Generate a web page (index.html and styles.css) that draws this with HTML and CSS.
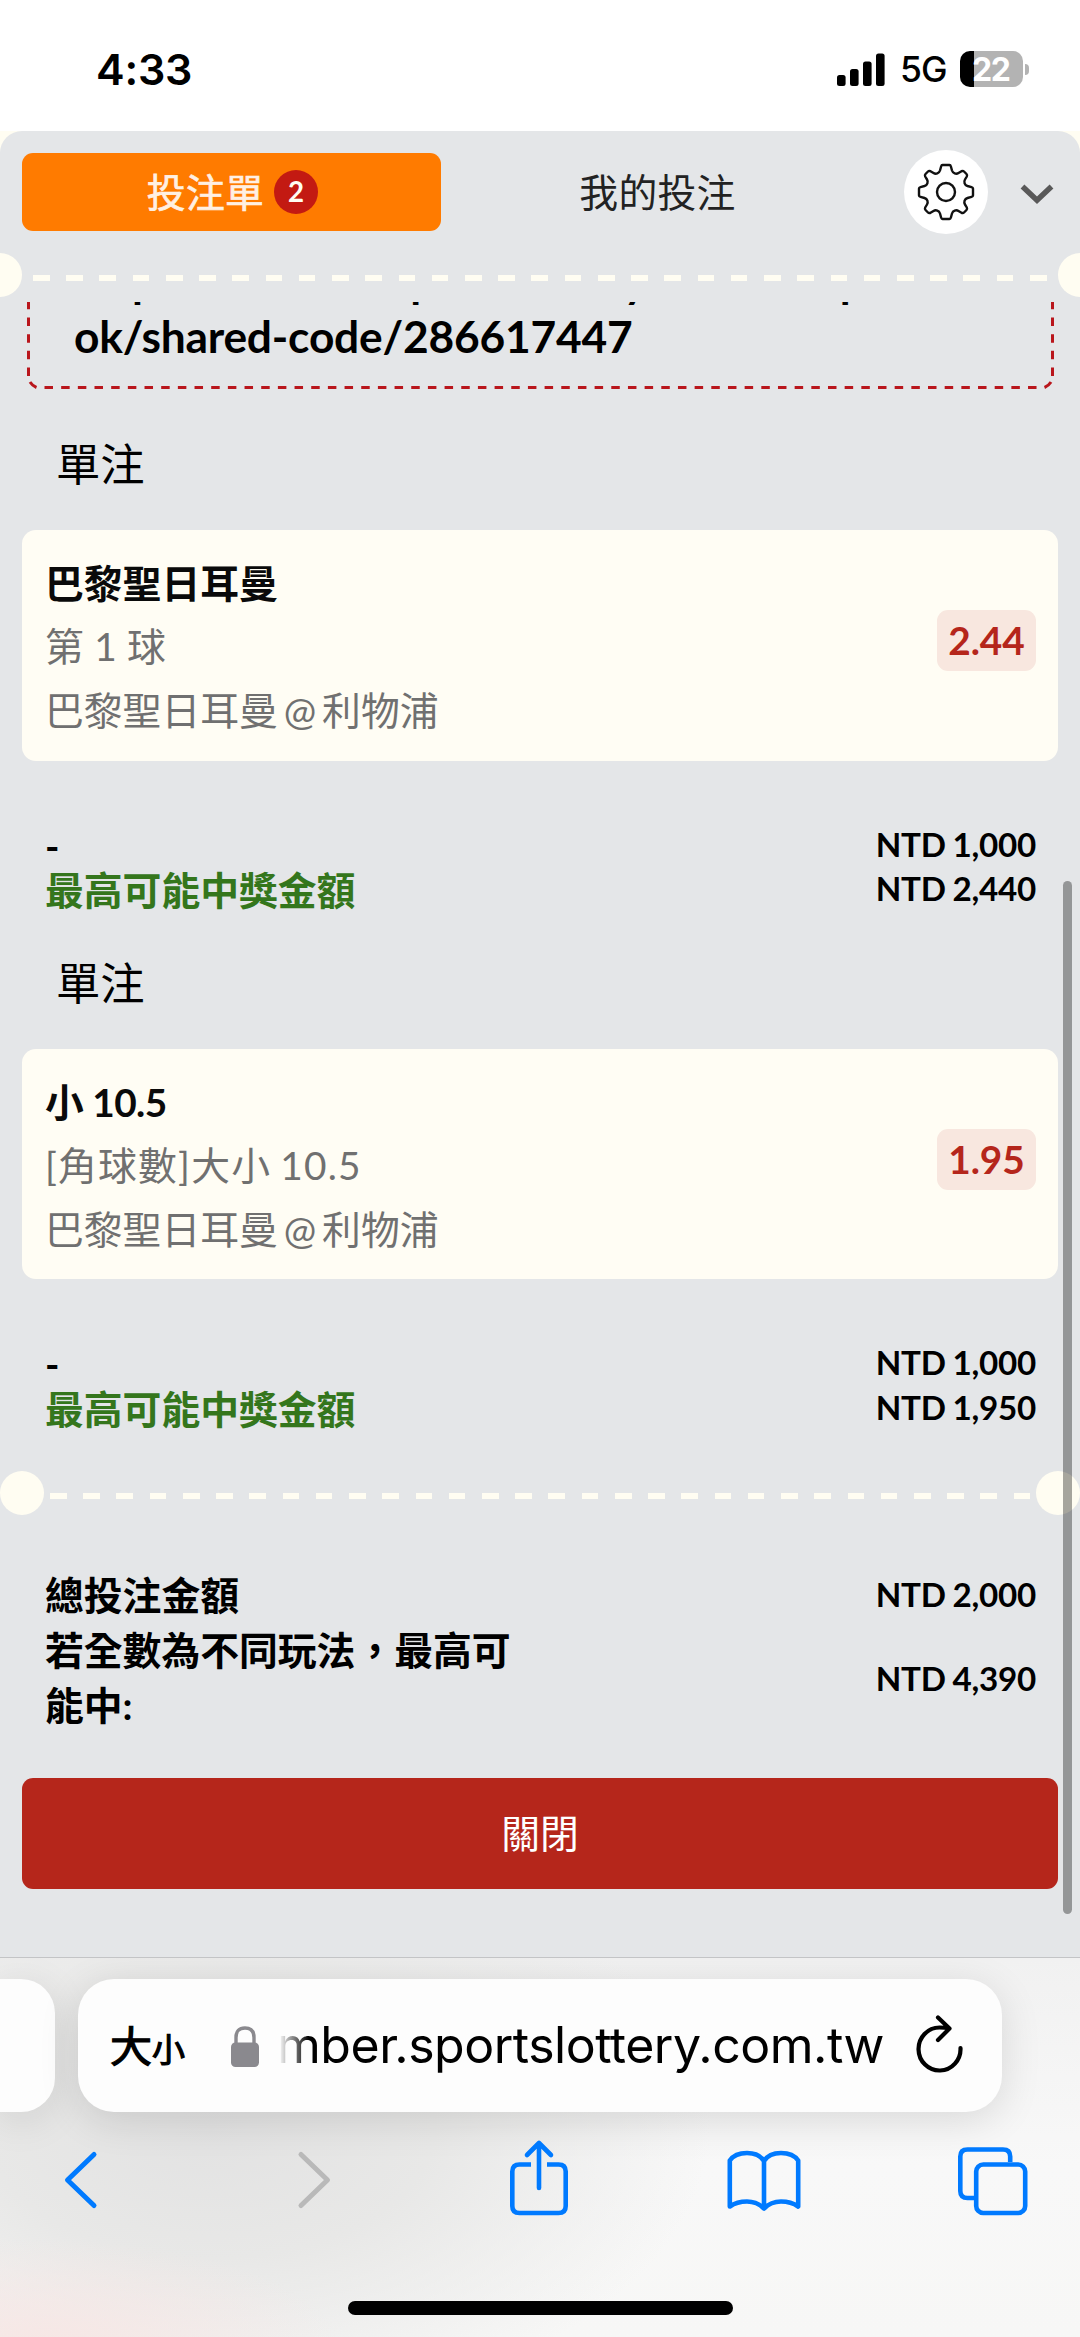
FILE: index.html
```html
<!DOCTYPE html>
<html lang="zh-Hant">
<head>
<meta charset="utf-8">
<title>投注單</title>
<link rel="stylesheet" href="styles.css">
</head>
<body>
<div class="phone">
  <header class="status">
    <span class="clock">4:33</span>
    <div class="status-right">
      <svg class="signal" width="48" height="33" viewBox="0 0 48 33"><rect x="0" y="22" width="8.6" height="11" rx="2.5"/><rect x="13" y="16" width="8.6" height="17" rx="2.5"/><rect x="26" y="8.5" width="8.6" height="24.500" rx="2.5"/><rect x="39" y="0.500" width="8.6" height="32.500" rx="2.5"/></svg>
      <span class="network">5G</span>
      <div class="battery"><span class="battery-body">22</span><span class="battery-cap"></span></div>
    </div>
  </header>

  <main class="sheet-wrap">
    <div class="sheet">
      <div class="tabs">
        <button class="tab tab-active">投注單<span class="badge">2</span></button>
        <button class="tab">我的投注</button>
        <button class="gear-btn">
          <svg width="58" height="58" viewBox="-29 -29 58 58" fill="none" stroke="#111" stroke-width="2.4" stroke-linejoin="round"><path d="M-3.500-27H3.500Q4.500-27 4.900-25.500L6-21.500Q6.700-19.300 8.700-18.600T12.500-19L15.500-20.800Q17-21.500 18-20.500L20.500-18Q21.500-17 20.800-15.500L19-12.500Q17.900-10.700 18.600-8.700T21.500-6L25.500-4.900Q27-4.500 27-3.500V3.500Q27 4.500 25.500 4.900L21.500 6Q19.300 6.700 18.600 8.700T19 12.500L20.800 15.500Q21.500 17 20.500 18L18 20.500Q17 21.500 15.500 20.800L12.500 19Q10.700 17.900 8.700 18.600T6 21.500L4.900 25.500Q4.500 27 3.500 27H-3.500Q-4.500 27-4.900 25.500L-6 21.500Q-6.700 19.300-8.700 18.600T-12.500 19L-15.500 20.800Q-17 21.500-18 20.500L-20.500 18Q-21.500 17-20.800 15.500L-19 12.500Q-17.900 10.700-18.600 8.700T-21.500 6L-25.500 4.900Q-27 4.500-27 3.500V-3.500Q-27-4.500-25.500-4.900L-21.500-6Q-19.300-6.700-18.600-8.700T-19-12.500L-20.800-15.500Q-21.500-17-20.500-18L-18-20.500Q-17-21.500-15.500-20.800L-12.500-19Q-10.700-17.900-8.700-18.600T-6-21.500L-4.900-25.500Q-4.500-27-3.500-27Z"/><circle r="9"/></svg>
        </button>
        <svg class="collapse" width="34" height="22" viewBox="0 0 34 22" fill="none" stroke="#595959" stroke-width="5.500"><path d="M2.500 3.500 17 17.200 31.500 3.500"/></svg>
      </div>
      <div class="tear tear-outer"><i class="hole"></i><i class="dash"></i><i class="hole"></i></div>

      <div class="content">
        <div class="share-box">
          <svg class="share-border" width="1027" height="147" viewBox="0 0 1027 147" fill="none" stroke="#b9161c" stroke-width="3"><path d="M1.500 58V137" stroke-dasharray="8.500 8.170" stroke-dashoffset="-.8"/><path d="M1025.500 58V137" stroke-dasharray="8.500 8.170" stroke-dashoffset="-.8"/><path d="M3 140Q5.500 144 9.500 145.500M1024 140Q1021.500 144 1017.500 145.500"/><path d="M17.500 145.500H1011" stroke-dasharray="8.500 8.170"/></svg>
          <p class="share-url"><span class="share-host">https://member.sportslottery.com.tw/sportsbo</span><br>ok/shared-code/286617447</p>
        </div>

        <section class="bet">
          <h2>單注</h2>
          <article class="card">
            <div class="pick"><p class="pick-name">巴黎聖日耳曼</p><p class="pick-market">第 1 球</p><p class="pick-event">巴黎聖日耳曼 @ 利物浦</p></div>
            <span class="odds">2.44</span>
          </article>
          <div class="summary">
            <div class="labels"><p class="stake">-</p><p class="win">最高可能中獎金額</p></div>
            <div class="amounts"><p>NTD 1,000</p><p>NTD 2,440</p></div>
          </div>
        </section>

        <section class="bet">
          <h2>單注</h2>
          <article class="card">
            <div class="pick"><p class="pick-name">小 <span class="line-value">10.5</span></p><p class="pick-market">[角球數]大小 10.5</p><p class="pick-event">巴黎聖日耳曼 @ 利物浦</p></div>
            <span class="odds">1.95</span>
          </article>
          <div class="summary">
            <div class="labels"><p class="stake">-</p><p class="win">最高可能中獎金額</p></div>
            <div class="amounts"><p>NTD 1,000</p><p>NTD 1,950</p></div>
          </div>
        </section>

        <div class="tear tear-inner"><i class="hole"></i><i class="dash"></i><i class="hole"></i></div>

        <div class="totals">
          <div class="total-row"><p class="total-label">總投注金額</p><p class="total-amount total-first">NTD 2,000</p></div>
          <div class="total-row"><p class="total-label">若全數為不同玩法，最高可能中:</p><p class="total-amount">NTD 4,390</p></div>
        </div>
        <button class="close">關閉</button>
      </div>
      <div class="scrollbar"></div>
    </div>
  </main>

  <footer class="browser">
    <div class="address-row">
      <div class="prev-tab"></div>
      <div class="address">
        <span class="text-size">大<small>小</small></span>
        <svg class="lock" width="28" height="41" viewBox="0 0 28 41"><path d="M5 18V11.500Q5 2 14 2T23 11.500V18" fill="none" stroke="#8a898e" stroke-width="3.400"/><rect y="16.500" width="28" height="24.500" rx="4.500" fill="#8a898e"/></svg>
        <span class="url">mber.sportslottery.com.tw</span>
        <svg class="reload" width="50" height="60" viewBox="0 0 50 60" fill="none" stroke="#000" stroke-width="4.200" stroke-linecap="round" stroke-linejoin="round"><path d="M45.500 34A21 21.500 0 1 1 24.500 13.500Q30 13.500 34 14.500M23 3.500 34.500 14.500 23 26"/></svg>
      </div>
    </div>
    <nav class="tools">
      <svg width="36" height="80" viewBox="0 0 36 80" fill="none" stroke="#007aff" stroke-width="5" stroke-linecap="round" stroke-linejoin="round"><path d="M32 16.500 5.500 42 32 67.500"/></svg>
      <svg class="forward" width="36" height="80" viewBox="0 0 36 80" fill="none" stroke="#b9b9b9" stroke-width="5" stroke-linecap="round" stroke-linejoin="round"><path d="M5 16.500 31.500 42 5 67.500"/></svg>
      <svg class="share" width="60" height="80" viewBox="0 0 60 80" fill="none" stroke="#007aff" stroke-width="4.600"><path d="M22 26.500H10.500Q3.300 26.500 3.300 33.500V68Q3.300 75 10.500 75H49.500Q56.700 75 56.700 68V33.500Q56.700 26.500 49.500 26.500H38"/><path d="M30 50V6M18 17 30 5 42 17" stroke-linecap="round" stroke-linejoin="round"/></svg>
      <svg width="74" height="80" viewBox="0 0 74 80" fill="none" stroke="#007aff" stroke-width="4.600" stroke-linejoin="round" stroke-linecap="round"><path d="M37 70.500V23Q32 15 20 15T2.800 22.500V68.500Q10 63.500 20 63.500T37 70.500Q44 63.500 54 63.500T71.200 68.500V22.500Q66 15 54 15T37 23"/></svg>
      <svg width="72" height="80" viewBox="0 0 72 80" fill="none" stroke="#007aff" stroke-width="4.600"><path d="M17 60H10.500Q3.300 60 3.300 53V18.500Q3.300 11.500 10.500 11.500H46Q53.200 11.500 53.200 18.500V24"/><rect x="19.200" y="26.500" width="49" height="48.500" rx="7"/></svg>
    </nav>
    <div class="home"></div>
  </footer>
</div>
</body>
</html>
```

FILE: styles.css
```css
* { box-sizing: border-box; margin: 0; padding: 0; }
body { background: #fff; color: #000; font-family: Lato, "Noto Sans CJK TC", sans-serif; }
button { border: 0; background: none; color: inherit; font: inherit; }
svg, i { display: block; flex: none; }

.phone { width: 1080px; height: 2337px; display: flex; flex-direction: column; overflow: hidden; }

/* status bar */
.status { height: 131px; flex: none; display: flex; justify-content: space-between; align-items: flex-start; padding: 0 51px 0 96px; font-family: Inter, sans-serif; }
.clock { font-size: 43px; font-weight: 600; line-height: 52px; margin-top: 43px; letter-spacing: -.2px; }
.status-right { display: flex; align-items: center; height: 36px; margin-top: 51px; }
.network { font-size: 35.500px; font-weight: 500; line-height: 36px; margin: 2px 0 0 15px; width: 60px; letter-spacing: -1px; }
.battery { display: flex; align-items: center; gap: 2px; }
.battery-body { width: 63px; height: 36px; border-radius: 10px; background: linear-gradient(90deg, #000 14px, #b3b3b3 14px); color: #fff; font-size: 32px; font-weight: 700; line-height: 37px; padding-left: 12px; letter-spacing: -1.500px; }
.battery-cap { width: 4px; height: 11px; border-radius: 0 5px 5px 0; background: #b3b3b3; }

/* bet slip sheet */
.sheet-wrap { height: 1826px; flex: none; background: #fffdf2; }
.sheet { position: relative; height: 100%; display: flex; flex-direction: column; background: #e4e6e8; border-radius: 22px 22px 0 0; }
.tabs { display: flex; align-items: center; height: 122px; flex: none; padding: 0 26px 0 22px; font-size: 38.800px; }
.tab { width: 419px; height: 78px; border-radius: 11px; display: flex; align-items: center; justify-content: center; line-height: 55px; letter-spacing: .3px; color: #222; }
.tab + .tab { width: 432px; padding-left: 1px; }
.tab-active { padding-left: 2px; background: #ff7b00; color: #fff0e3; -webkit-text-stroke: .7px #fff0e3; }
.badge { width: 44px; height: 44px; margin-left: 10px; border-radius: 50%; background: #c31a12; color: #fffdf2; font-size: 27.700px; font-weight: 700; line-height: 44px; text-align: center; letter-spacing: 0; -webkit-text-stroke: 0; }
.gear-btn { width: 84px; height: 84px; flex: none; margin-left: 31px; border-radius: 50%; background: #fff; display: grid; place-items: center; }
.collapse { margin: 3px 0 0 32px; }

.tear { display: flex; align-items: center; height: 44px; flex: none; }
.hole { width: 44px; height: 44px; border-radius: 50%; background: #fffdf2; }
.dash { flex: 1; height: 6px; margin-top: 6px; background: repeating-linear-gradient(90deg, #fffdf2 0 16.600px, transparent 16.600px 33.230px); }
.tear-outer { margin: 0 -22px; clip-path: inset(0 22px); }
.tear-outer .dash { margin-left: 11px; margin-right: 11px; }
.tear-inner { margin-top: 40px; }
.tear-inner .dash { margin-left: 6px; margin-right: 6px; }

.content { flex: 1; margin-top: 5px; overflow: hidden; }
.share-box { position: relative; height: 147px; margin: -60px 26px 5px 27px; padding: 11px 47px 0; }
.share-border { position: absolute; inset: 0; }
.share-url { font-size: 44.300px; font-weight: 700; line-height: 55.400px; letter-spacing: -.2px; white-space: nowrap; }
.share-host { letter-spacing: .1px; }

.bet { padding-top: 42px; }
.bet h2 { height: 56px; margin: 0 0 38px 56px; font-size: 44.300px; font-weight: 400; line-height: 56px; }
.card { display: flex; justify-content: space-between; align-items: flex-start; height: 230.500px; margin: 0 22px; padding: 22px 22px 0 23px; border-radius: 14px; background: #fffdf4; font-size: 38.800px; }
.pick-name { font-weight: 700; line-height: 63px; word-spacing: -1px; color: #0a0a0a; }
.line-value { letter-spacing: -.6px; }
.pick-market { line-height: 63px; letter-spacing: 1.200px; word-spacing: -2px; color: #707070; }
.pick-event { line-height: 64px; word-spacing: -4px; color: #707070; }
.odds { width: 99px; height: 61px; margin-top: 58px; border-radius: 11px; background: #f8e7df; color: #b5261b; font-weight: 700; line-height: 60px; text-align: center; }
.summary { display: flex; justify-content: space-between; height: 91px; margin: 61px 44px 0 45px; font-weight: 700; }
.labels { font-size: 38.800px; line-height: 46px; }
.stake { height: 45.500px; line-height: 49px; }
.win { color: #34761c; }
.amounts { font-size: 33.200px; line-height: 44.500px; letter-spacing: -.25px; word-spacing: -1px; text-align: right; }

.totals { margin: 52.500px 44px 0 45px; font-weight: 700; }
.total-row { display: flex; justify-content: space-between; align-items: center; }
.total-label { width: 480px; font-size: 38.800px; line-height: 55.400px; }
.total-amount { font-size: 33.200px; line-height: 44px; letter-spacing: -.25px; word-spacing: -1px; }
.total-first { padding-bottom: 3px; }
.close { display: block; width: 1036px; height: 111px; margin: 44px 22px 0; border-radius: 11px; background: #b5261b; color: #fff; font-size: 38.800px; line-height: 110px; }
.scrollbar { position: absolute; left: 1063px; top: 750px; width: 9px; height: 1033px; border-radius: 5px; background: rgba(0, 0, 0, .35); }

/* browser toolbar */
.browser { height: 380px; border-top: 1px solid #c3c4c6; overflow: hidden; background: radial-gradient(ellipse 300px 110px at 40px 390px, #f7e6e4, transparent), radial-gradient(ellipse 500px 290px at 210px 170px, #e2e2e2 0, #e8e8e7 45%, transparent), linear-gradient(#f1f1f1, #f8f8f8 55%, #f7f7f6); }
.address-row { display: flex; gap: 23px; padding-top: 21px; }
.prev-tab { width: 55px; height: 133px; border-radius: 0 34px 34px 0; background: #fdfdfd; box-shadow: 0 8px 40px rgba(0, 0, 0, .1); }
.address { width: 924px; height: 133px; display: flex; align-items: center; padding-left: 32px; border-radius: 36px; background: #fdfdfd; box-shadow: 0 8px 40px rgba(0, 0, 0, .12); }
.text-size { width: 121px; font: 400 42px/60px "Noto Sans CJK TC", sans-serif; -webkit-text-stroke: 1.200px #000; white-space: nowrap; }
.text-size small { font-size: 33px; }
.lock { margin: 2px 0 0; }
.url { width: 613px; height: 64px; margin-left: 12px; font: 400 50px/62px Inter, sans-serif; letter-spacing: -.5px; text-align: right; white-space: nowrap; -webkit-mask: linear-gradient(90deg, transparent 8px, #000 38px); mask: linear-gradient(90deg, transparent 8px, #000 38px); }
.reload { margin: -3px 0 0 31px; }
.tools { display: grid; grid-template-columns: repeat(5, 228.300px); justify-items: center; margin-left: -34.600px; padding-top: 26px; }
.forward { margin-left: 13px; }
.share { margin-left: 5px; }
.home { width: 385px; height: 14px; margin: 83px 0 0 348px; border-radius: 7px; background: #000; }
```
